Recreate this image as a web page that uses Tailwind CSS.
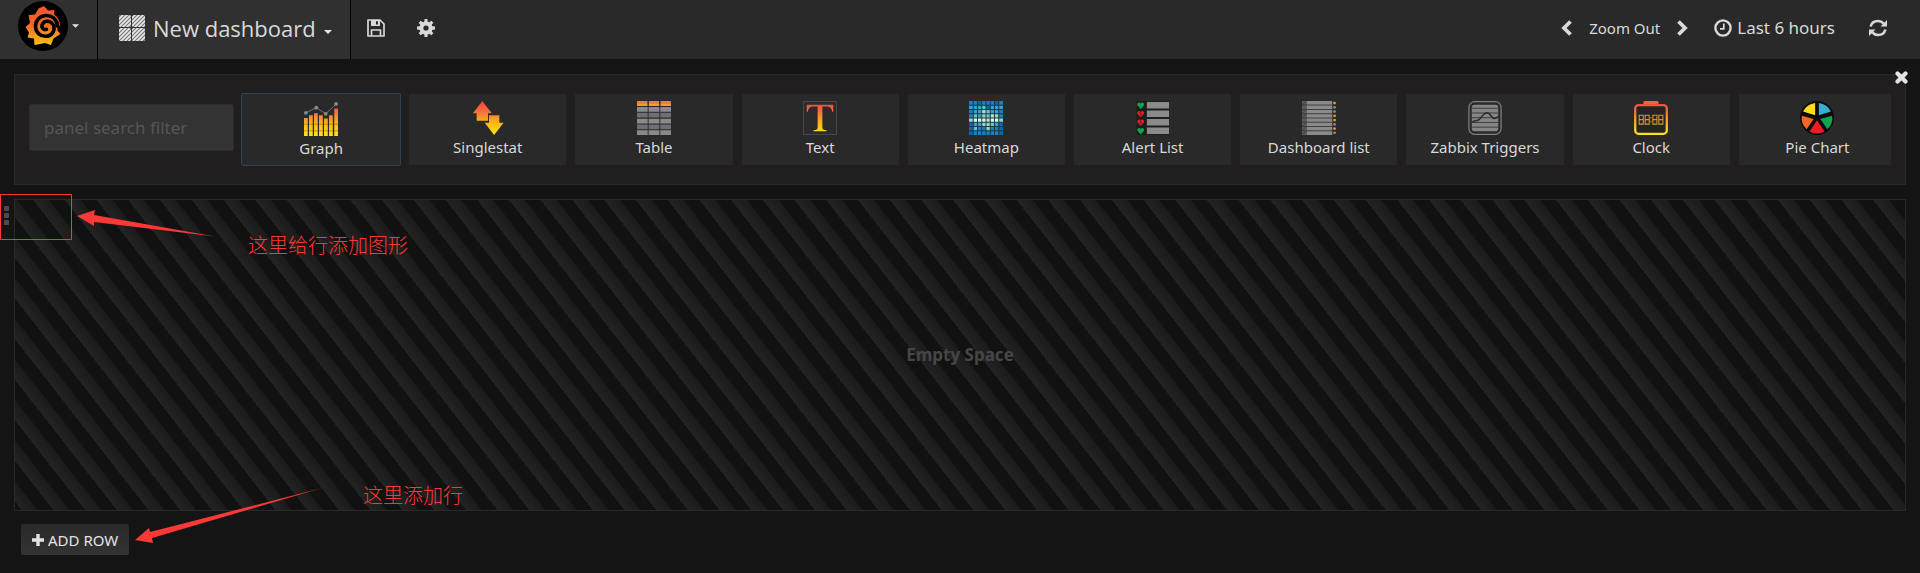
<!DOCTYPE html>
<html lang="en">
<head>
<meta charset="utf-8">
<title>New dashboard</title>
<script src="https://cdn.jsdelivr.net/npm/@tailwindcss/browser@4"></script>
</head>
<body class="min-h-screen overflow-x-hidden bg-[#141414] font-['Noto_Sans',sans-serif] text-[15px] leading-6 text-[#d8d9da]">
<svg class="absolute size-0" aria-hidden="true">
  <defs>
    <linearGradient id="warm" x1="0" y1="0" x2="0" y2="36" gradientUnits="userSpaceOnUse">
      <stop offset="0" stop-color="#ee3f3e"/><stop offset=".35" stop-color="#f3793b"/><stop offset=".65" stop-color="#fdb813"/><stop offset="1" stop-color="#ffe21f"/>
    </linearGradient>
    <linearGradient id="logo" x1="0" y1="8" x2="0" y2="46" gradientUnits="userSpaceOnUse">
      <stop offset="0" stop-color="#f05a28"/><stop offset=".4" stop-color="#f2682a"/><stop offset="1" stop-color="#fbca0a"/>
    </linearGradient>
    <pattern id="hatch" width="4" height="4" patternUnits="userSpaceOnUse">
      <rect width="4" height="4" fill="#777"/><path d="M-1 1L1-1M0 4L4 0M3 5L5 3" stroke="#e8e8e8" stroke-width="1.700"/>
    </pattern>
  </defs>
</svg>

<header class="flex h-[59px] items-stretch bg-[#292929]">
  <button class="flex w-[98px] items-center gap-1 border-r border-black bg-[#303030] pb-[7px] pl-[18px]" aria-label="Main menu">
    <svg class="size-[50px]" viewBox="0 0 50 50">
      <circle cx="25" cy="25" r="25" fill="#000"/>
      <path fill="url(#logo)" d="M26 5l4 4.500 6.500-.5-.5 4.500c4 3 6 6.500 6 11.500l-2.500 0 0 4.500 3 3.500-5.500 3.500-1.500 1 -2.500 6.500-6-2-5 1-5.500 1-.5-6.500-6.500-1 1.500-5-3.500-5.500 4.500-4-1.500-8 6.500-.5 3.500-6z"/>
      <path fill="none" stroke="#000" stroke-width="3.600" stroke-linecap="round" d="M39.500 25c-.5-7-6-11-12-10.500-6.500.5-10.500 6-10 11.500.5 5.500 5 9.500 10.500 9.300 5-.2 8.500-4.300 8-9-.4-4-4-6.500-7.500-6-3 .4-5 3-4.500 5.500.4 2.200 2.500 3.200 4.500 2.500"/>
    </svg>
    <svg class="h-1 w-[7px]" viewBox="0 0 8 4"><path fill="#e8e8e8" d="M0 0h8L4 4z"/></svg>
  </button>
  <button class="flex w-[253px] items-center gap-2 border-r border-black bg-[#303030] pb-[4px] pl-[21px]">
    <svg class="size-[26px]" viewBox="0 0 26 26" fill="url(#hatch)"><rect width="12" height="12" rx="1.5"/><rect x="13" width="13" height="12" rx="1.5"/><rect y="13" width="12" height="13" rx="1.5"/><rect x="13" y="13" width="13" height="13" rx="1.5"/></svg>
    <span class="font-['Open_Sans',sans-serif] text-[22px]">New dashboard</span>
    <svg class="mt-2 h-1 w-2" viewBox="0 0 8 4"><path fill="#e8e8e8" d="M0 0h8L4 4z"/></svg>
  </button>
  <div class="flex items-center gap-8 pb-[3px] pl-4">
    <button aria-label="Save dashboard"><svg class="size-[18px]" viewBox="0 0 18 18"><path fill="none" stroke="#d8d9da" stroke-width="1.7" stroke-linejoin="round" d="M1 1h12l4 4v12H1z M4.5 17v-6h9v6"/><path fill="#d8d9da" fill-rule="evenodd" d="M4 1h9v6H4zM9 2.300v3.300h2V2.300z"/></svg></button>
    <button aria-label="Settings"><svg class="size-[18px]" viewBox="0 0 18 18"><g fill="#d8d9da"><path d="M7.600 0h2.800l.5 4H7.100zM7.600 18h2.800l.5-4H7.100zM0 7.600v2.800l4 .5V7.100zM18 7.600v2.800l-4 .5V7.100z"/><path d="M7.600 0h2.800l.5 4H7.100zM7.600 18h2.800l.5-4H7.100zM0 7.600v2.800l4 .5V7.100zM18 7.600v2.800l-4 .5V7.100z" transform="rotate(45 9 9)"/></g><circle cx="9" cy="9" r="4.600" fill="none" stroke="#d8d9da" stroke-width="4"/></svg></button>
  </div>
  <div class="ml-auto flex items-center pr-[33px] pb-[3px]">
    <button aria-label="Shift time back"><svg class="h-4 w-3" viewBox="0 0 12 16"><path fill="none" stroke="#d8d9da" stroke-width="3.800" d="M10.500 1.500L4 8l6.500 6.500"/></svg></button>
    <button class="mx-[17px]">Zoom Out</button>
    <button aria-label="Shift time forward"><svg class="h-4 w-3" viewBox="0 0 12 16"><path fill="none" stroke="#d8d9da" stroke-width="3.800" d="M1.500 1.500L8 8l-6.500 6.500"/></svg></button>
    <button class="ml-[25px] flex items-center gap-[5px] text-[17px]">
      <svg class="size-[18px]" viewBox="0 0 18 18" fill="none" stroke="#d8d9da"><circle cx="9" cy="9" r="7.600" stroke-width="2.400"/><path stroke-width="1.700" d="M9.800 4.500v5.300H6"/></svg>
      Last 6 hours
    </button>
    <button class="ml-[34px]" aria-label="Refresh"><svg class="size-[18px]" viewBox="0 0 18 18"><path fill="none" stroke="#d8d9da" stroke-width="2.600" d="M1.600 7.500C2.500 4 5.500 2 9 2c2.500 0 4.300 1 5.700 2.600M16.400 10.500C15.500 14 12.500 16 9 16c-2.500 0-4.300-1-5.700-2.600"/><path fill="#d8d9da" d="M18 1v6.500h-6.500zM0 17v-6.500h6.500z"/></svg></button>
  </div>
</header>

<main class="px-[14px] pt-[15px]">
  <section class="relative flex h-[111px] items-start border border-[#292929] bg-[#201e1e] px-[14px]">
    <button class="absolute -top-1 -right-[3px]" aria-label="Close"><svg class="size-[13px]" viewBox="0 0 13 13"><path stroke="#e3e3e3" stroke-width="4.200" stroke-linecap="round" d="M2.500 2.500l8 8M10.500 2.500l-8 8"/></svg></button>
    <input type="text" aria-label="panel search filter" placeholder="panel search filter" class="mt-[29px] h-[47px] w-[205px] shrink-0 rounded-xs border border-[#2c2c2c] bg-[#333] px-[14px] text-[17px] placeholder:text-[#555]">
    <div class="mt-[18px] ml-[9px] grid min-w-0 grow grid-cols-[repeat(9,157fr)_152fr] gap-[9px]">
      <button class="-mr-px -ml-0.5 flex h-[73px] flex-col items-center rounded-xs border border-[#2b4353] bg-[#292929] pt-2">
        <svg class="h-[34px] w-9" viewBox="0 0 36 36"><path fill="url(#warm)" d="M0 17h4v19H0zM5.300 14h4v22h-4zM10.600 12h4v24h-4zM15.900 14h4v22h-4zM21.200 17.500h4V36h-4zM26.500 14h4v22h-4zM32 7h4v29h-4z"/><path stroke="#292929" stroke-opacity=".35" d="M0 23.500h36M0 30.500h36"/><path fill="none" stroke="#777" d="M2 11.500L13 6l10 6.500L34 2"/><g fill="#8a8a8a"><circle cx="2" cy="11.500" r="2"/><circle cx="13" cy="6" r="2"/><circle cx="23" cy="12.500" r="2"/><circle cx="34" cy="2" r="2"/></g></svg>
        <span>Graph</span>
      </button>
      <button class="mt-px flex h-[71px] flex-col items-center bg-[#292929] pt-[7px]">
        <svg class="h-[34px] w-9" viewBox="0 0 36 36"><path fill="url(#warm)" d="M12 0l10 13h-4v8H6v-8H2zM19 15h11v8h4.500L24.500 36l-10-13H19z"/></svg>
        <span>Singlestat</span>
      </button>
      <button class="mt-px flex h-[71px] flex-col items-center bg-[#292929] pt-[7px]">
        <svg class="h-[34px] w-9" viewBox="0 0 36 36"><path fill="#f3793b" d="M0 0h11.300v5H0zM12.300 0h11.300v5H12.300zM24.700 0H36v5H24.700z"/><path fill="#fa9b24" d="M0 3h11.300v2.300H0zM12.300 3h11.300v2.300H12.300zM24.700 3H36v2.300H24.700z"/><path fill="#8a8a8a" d="M0 6.300h36v5H0zM0 18.700h36v5H0zM0 31h36v5H0z"/><path fill="#6e6f74" d="M0 12.500h36v5H0zM0 24.800h36v5H0z"/><path stroke="#292929" d="M11.800 0v36M24.200 0v36"/></svg>
        <span>Table</span>
      </button>
      <button class="mt-px flex h-[71px] flex-col items-center bg-[#292929] pt-[7px]">
        <svg class="h-[34px] w-9" viewBox="0 0 36 36"><path fill="#2b2b2b" stroke="#4b4b4b" d="M.5.500h35v35H.5z"/><path fill="url(#warm)" d="M4 4h28v7.500h-1C30.500 8 29 5.800 26 5.800h-5.500V28c0 2 1 2.800 4.500 3v1H11v-1c3.500-.2 4.500-1 4.500-3V5.800H10C7 5.800 5.500 8 5 11.500H4z"/></svg>
        <span>Text</span>
      </button>
      <button class="mt-px flex h-[71px] flex-col items-center bg-[#292929] pt-[7px]">
        <svg class="h-[34px] w-9" viewBox="0 0 36 36"><path fill="#0a67ab" d="M0 0h36v36H0z"/><path fill="#1f80bd" d="M0 0h9v4.500H0zM13.500 0H27v4.500H13.500zM31.500 0H36v4.500h-4.500zM0 9h4.500v13.500H0zM31.500 9H36v9h-4.500zM4.500 27h27v9h-27z"/><path fill="#3aa0c9" d="M0 4.500h13.500V9H0zM22.500 4.500H36V9H22.500zM4.500 9h27v18h-27z"/><path fill="#6bc0cb" d="M13.500 4.500h4.500v9h-4.500zM18 9h4.500v9H18zM4.500 13.500H9V18H4.500zM4.500 27H9v4.500H4.500zM22.500 22.500H27V27h-4.500z"/><path fill="#99d3bd" d="M13.500 9H18v9h-4.500zM27 13.500h4.500V18H27zM0 18h4.500v4.500H0zM31.500 18H36v4.500h-4.500zM13.500 22.500h9V27h-9zM18 27h4.500v4.500H18z"/><path fill="#e6f3d8" d="M4.500 18h13.500v4.500H4.500zM22.500 18h9v4.500h-9z"/><path fill="#b7dfbd" d="M13.500 9H18v4.500h-4.500zM22.500 13.500H27V18h-4.500zM18 18h4.500v4.500H18z"/><path stroke="#123448" d="M4.500 0v36M9 0v36M13.500 0v36M18 0v36M22.500 0v36M27 0v36M31.500 0v36M0 4.500h36M0 9h36M0 13.500h36M0 18h36M0 22.500h36M0 27h36M0 31.500h36"/></svg>
        <span>Heatmap</span>
      </button>
      <button class="mt-px flex h-[71px] flex-col items-center bg-[#292929] pt-[7px]">
        <svg class="h-[34px] w-9" viewBox="0 0 36 36"><path fill="#1d1d1d" d="M.500 0h35v36H.5z"/><path fill="#8a8a8a" d="M11.500 1h23.500v7H11.500zM11.500 10h23.500v7H11.500zM11.500 19h23.500v7H11.500zM11.500 28h23.500v7H11.500z"/><path fill="#0ba64f" d="M5 8.500L1.500 4.500C.800 2 4 .5 5 3c1-2.500 4.200-1 3.500 1.500zM5 35.500l-3.500-4C.800 29 4 27.500 5 30c1-2.500 4.200-1 3.500 1.500z"/><path fill="#e02128" d="M5 17.500l-3.500-4C.800 11 4 9.500 5 12c1-2.500 4.200-1 3.500 1.500zM5 26.500l-3.500-4C.800 20 4 18.500 5 21c1-2.500 4.200-1 3.500 1.500z"/><path fill="none" stroke="#1d1d1d" stroke-width=".6" d="M5 11.500l-1 2 2 .5-1 2M5 20.500l-1 2 2 .5-1 2"/></svg>
        <span>Alert List</span>
      </button>
      <button class="mt-px flex h-[71px] flex-col items-center bg-[#292929] pt-[7px]">
        <svg class="h-[34px] w-9" viewBox="0 0 36 36"><path fill="#5b5b5b" d="M0 0h5v36H0z"/><path fill="#8a8a8a" d="M5 0h27v36H5z"/><path stroke="#3a3a3a" d="M0 4.300h33M0 9h33M0 13.500h33M0 18h33M0 22.500h33M0 27h33M0 31.500h33"/><path stroke="#383838" stroke-width=".8" d="M1 3.500L4 .5M1 12.500l3-3M1 17l3-3M1 26l3-3M1 30.500l3-3M1 35l3-3"/><g fill="#f7941e"><circle cx="34.500" cy="2.200" r="1.500"/><circle cx="34.500" cy="15.700" r="1.500"/><circle cx="34.500" cy="20.200" r="1.500"/><circle cx="34.500" cy="29.200" r="1.500"/></g><g fill="#8a8a8a"><circle cx="34.500" cy="6.700" r="1.500"/><circle cx="34.500" cy="11.200" r="1.500"/><circle cx="34.500" cy="24.700" r="1.500"/><circle cx="34.500" cy="33.700" r="1.500"/></g></svg>
        <span>Dashboard list</span>
      </button>
      <button class="mt-px flex h-[71px] flex-col items-center bg-[#292929] pt-[7px]">
        <svg class="h-[34px] w-9" viewBox="0 0 36 36"><rect x="1" y=".7" width="34" height="34.600" rx="6" fill="#292929" stroke="#808080" stroke-width="1.300"/><rect x="4" y="4" width="28" height="28" rx="3" fill="#858585"/><path stroke="#3a3a3a" d="M4 7.700h28M4 12.700h28M4 17.700h28M4 22.700h28M4 27.700h28"/><path fill="none" stroke="#2b2b2b" stroke-width="1.600" d="M4 22.500c4-3 5-.5 8-3 3-3 5-7 8-7 4 0 5 6 8 6 2 0 2-1 4-2"/></svg>
        <span>Zabbix Triggers</span>
      </button>
      <button class="mt-px flex h-[71px] flex-col items-center bg-[#292929] pt-[7px]">
        <svg class="h-[34px] w-9" viewBox="0 0 36 36"><path fill="#ee6340" d="M10 4V1.500Q10 0 11.500 0h13Q26 0 26 1.500V4z"/><rect x="1.300" y="4.300" width="33.400" height="30.400" rx="3.500" fill="#242424" stroke="url(#warm)" stroke-width="2.400"/><path fill="none" stroke="#d99a1b" stroke-width="1.100" d="M5.500 15h4.300v9.500H5.500zM5.500 19.700h4.300M11.800 15h4.300v9.500h-4.300zM11.800 19.700h4.300M20 15h4.300v9.500H20zM20 19.700h4.300M26.300 15h4.300v9.500h-4.300zM26.300 19.700h4.300M18 17v1.500M18 21v1.500"/></svg>
        <span>Clock</span>
      </button>
      <button class="mt-px flex h-[71px] flex-col items-center bg-[#292929] pt-[7px] pl-[5px]">
        <svg class="h-[34px] w-9" viewBox="0 0 36 36"><circle cx="18" cy="18" r="18" fill="#0b0b0b"/><path fill="#32b0cf" d="M20 2a16 16 0 0 1 12.800 9.200L20 15z"/><path fill="#ffdc16" d="M16 2A16 16 0 0 0 3.200 11.200L16 15z"/><path fill="#0ba64f" d="M34 15.500a16 16 0 0 1-5 14.300L21.500 19z"/><path fill="#f26522" d="M2 15.500a16 16 0 0 0 5 14.300L14.500 19z"/><path fill="#ed1c24" d="M18 20.500l8 11.700a16 16 0 0 1-16 0z"/></svg>
        <span>Pie Chart</span>
      </button>
    </div>
  </section>

  <section class="relative mt-[14px]">
    <div class="flex h-[312px] items-center justify-center border border-[#292929] bg-[repeating-linear-gradient(-128deg,#111,#111_12px,#1b1b1b_13px,#232323_25px)]">
      <span class="text-[17px] font-bold text-[#464646]">Empty Space</span>
    </div>
    <button class="absolute top-[7px] -left-[10px] flex w-[5px] flex-col gap-[2px]" aria-label="Row menu">
      <span class="h-[5px] rounded-[1px] bg-[#4b4b4b]"></span><span class="h-[5px] rounded-[1px] bg-[#4b4b4b]"></span><span class="h-[5px] rounded-[1px] bg-[#4b4b4b]"></span>
    </button>
    <div class="absolute -top-[5px] -left-[14px] h-[46px] w-[72px] border border-[#fb3838]"></div>
    <svg class="absolute top-[10px] left-[63px] h-[30px] w-[140px]" viewBox="0 0 140 30"><path fill="#fb3838" d="M0 7l18-6-1 5 121 21.500L17 13v4z"/></svg>
    <p class="absolute top-[34px] left-[234px] font-['Noto_Sans_CJK_SC',sans-serif] text-[20px] font-light text-[#fb3838]">这里给行添加图形</p>
    <p class="absolute top-[284px] left-[349px] font-['Noto_Sans_CJK_SC',sans-serif] text-[20px] font-light text-[#fb3838]">这里添加行</p>
    <svg class="absolute top-[289px] left-[121px] h-[56px] w-[190px]" viewBox="0 0 190 56"><path fill="#fb3838" d="M0 52l14-12 1 4L187 0 17 50l1 5z"/></svg>
  </section>

  <button class="mt-[13px] ml-[7px] flex h-[31px] items-center gap-1 rounded-xs bg-linear-to-b from-[#292929] to-[#333] px-[11px] text-[#e3e3e3]">
    <svg class="size-3" viewBox="0 0 12 12"><path stroke="#e3e3e3" stroke-width="3.400" d="M6 0v12M0 6h12"/></svg>
    ADD ROW
  </button>
</main>
</body>
</html>
